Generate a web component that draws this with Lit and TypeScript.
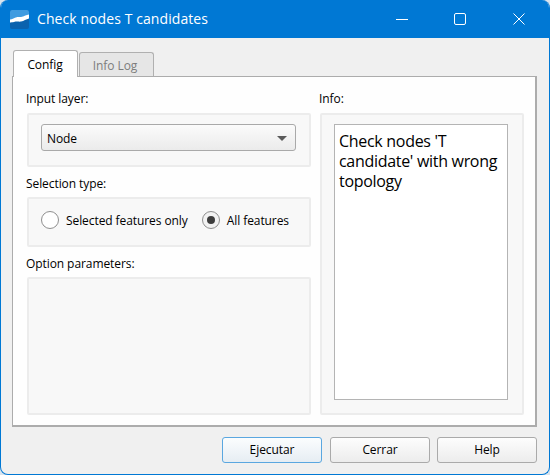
import { LitElement, html, css } from "lit";
import { customElement } from "lit/decorators.js";

@customElement("app-root")
export class AppRoot extends LitElement {
  static styles = css`
    :host { display: block; width: 550px; height: 475px; font-family: "Open Sans", "Noto Sans", sans-serif; font-size: 12px; letter-spacing: -0.08px; color: #000; background: #d9e4ee; }
    .win { box-sizing: border-box; width: 550px; height: 475px; display: flex; flex-direction: column; background: #f0f0f0; border: 1px solid #0078d4; border-top: none; border-radius: 8px; overflow: hidden; }
    .title { height: 38px; flex: none; background: #0078d4; color: #fff; display: flex; align-items: center; margin: 0 -1px; padding-right: 2px; }
    .logo { margin-left: 10px; width: 19px; height: 19px; flex: none; }
    .title-text { margin-left: 8px; font-size: 14px; letter-spacing: 0.08px; white-space: nowrap; flex: 1; padding-bottom: 1px; }
    .ctl { width: 58px; height: 38px; display: flex; align-items: center; justify-content: center; flex: none; }
    .ctl.close { margin-left: 1px; }
    .body { flex: 1; display: flex; flex-direction: column; padding: 12px 12px 11px 11px; min-height: 0; }
    .tabs { display: flex; align-items: flex-end; height: 26px; flex: none; padding-left: 1px; position: relative; z-index: 1; }
    .tab { box-sizing: border-box; display: flex; align-items: center; justify-content: center; border: 1px solid #b0b0b0; border-bottom: none; border-radius: 3px 3px 0 0; }
    .tab.on { width: 65px; height: 27px; margin-bottom: -1px; background: #fff; padding-right: 1px; }
    .tab.off { width: 75px; height: 24px; margin-left: 1px; background: #e6e6e6; color: #7d7d7d; padding: 1px 3px 0 0; }
    .pane { box-sizing: border-box; flex: none; height: 351px; width: 525px; background: #fefefe; border: 1px solid #acacac; border-right-width: 2px; border-bottom-width: 2px; padding: 12px 12px 11px 14px; display: grid; grid-template-columns: 284px 204px; column-gap: 9px; }
    .col { display: flex; flex-direction: column; min-height: 0; }
    .lbl { height: 24px; line-height: 20px; flex: none; margin-left: -1px; }
    .lbl.next { height: 30px; line-height: 34px; }
    .box { box-sizing: border-box; background: #f8f8f8; border: 2px solid #ececec; border-radius: 2px; flex: none; }
    .input { height: 54px; padding: 9px 13px 0 12px; }
    .select { box-sizing: border-box; height: 27px; border: 1px solid #a9a9a9; border-radius: 3px; background: linear-gradient(#fbfbfb, #ebebeb); display: flex; align-items: center; justify-content: space-between; padding: 1px 8px 0 5px; }
    .arrow { width: 0; height: 0; border-left: 5px solid transparent; border-right: 5px solid transparent; border-top: 5px solid #5a5a5a; }
    .sel { height: 50px; display: flex; align-items: center; padding-left: 12px; padding-bottom: 4px; }
    .radio { box-sizing: border-box; width: 18px; height: 18px; border: 1px solid #8f8f8f; border-radius: 50%; background: #fff; flex: none; display: flex; align-items: center; justify-content: center; }
    .radio.on { background: #f2f2f2; }
    .dot { width: 8px; height: 8px; border-radius: 50%; background: #3d3d3d; }
    .rlabel { margin-left: 7px; white-space: nowrap; }
    .rlabel.a { margin-right: 14px; }
    .opts { height: 138px; }
    .info { height: 302px; padding: 9px 14px 13px 12px; }
    .text { box-sizing: border-box; height: 276px; background: #fff; border: 1px solid #b4b4b4; padding: 6px 4px 0 4px; font-size: 16px; line-height: 20px; letter-spacing: -0.3px; }
    .foot { flex: none; display: flex; justify-content: flex-end; gap: 8px; padding-top: 10px; }
    .btn { box-sizing: border-box; width: 100px; height: 26px; border: 1px solid #aaa; border-radius: 3px; background: linear-gradient(#fdfdfd, #ececec); display: flex; align-items: center; justify-content: center; padding-bottom: 1px; }
    .btn.def { border-color: #5aa7e0; background: linear-gradient(#fbfdfe, #e6edf3); }
    .btn.last { margin-left: -1px; }
  `;

  render() {
    return html`<div class="win">
      <div class="title">
        <svg class="logo" viewBox="0 0 19 19">
          <rect width="19" height="19" rx="2" fill="#0a62ae"/>
          <path d="M0 2a2 2 0 0 1 2-2h15a2 2 0 0 1 2 2v3c-3 0-4.500 1.500-7 2.500S7 7.500 4.500 9 1.500 10.500 0 10.500z" fill="#3f9be0"/>
          <path d="M0 9.500c2.500-.5 3.500-1 5-1.800C8 6.200 9.500 7.500 12 6.800s4-2 7-2.300v4c-3 .5-5 2.800-8 3.100-2.500.2-4.500-.4-7 .4-1.500.4-3 .4-4 .5z" fill="#fff"/>
        </svg>
        <span class="title-text">Check nodes T candidates</span>
        <div class="ctl"><svg width="12" height="12" viewBox="0 0 12 12"><path d="M0 6.500h12" stroke="#fff" stroke-width="1"/></svg></div>
        <div class="ctl"><svg width="12" height="12" viewBox="0 0 12 12"><rect x=".5" y=".5" width="11" height="11" rx="1.500" fill="none" stroke="#fff"/></svg></div>
        <div class="ctl close"><svg width="12" height="12" viewBox="0 0 12 12"><path d="M.5.500l11 11M11.500.500l-11 11" stroke="#fff" stroke-width="1"/></svg></div>
      </div>
      <div class="body">
        <div class="tabs">
          <div class="tab on">Config</div>
          <div class="tab off">Info Log</div>
        </div>
        <div class="pane">
          <div class="col">
            <div class="lbl">Input layer:</div>
            <div class="box input"><div class="select"><span>Node</span><span class="arrow"></span></div></div>
            <div class="lbl next">Selection type:</div>
            <div class="box sel">
              <span class="radio"></span><span class="rlabel a">Selected features only</span>
              <span class="radio on"><span class="dot"></span></span><span class="rlabel">All features</span>
            </div>
            <div class="lbl next">Option parameters:</div>
            <div class="box opts"></div>
          </div>
          <div class="col">
            <div class="lbl">Info:</div>
            <div class="box info"><div class="text">Check nodes 'T candidate' with wrong topology</div></div>
          </div>
        </div>
        <div class="foot">
          <div class="btn def">Ejecutar</div>
          <div class="btn">Cerrar</div>
          <div class="btn last">Help</div>
        </div>
      </div>
    </div>`;
  }
}
